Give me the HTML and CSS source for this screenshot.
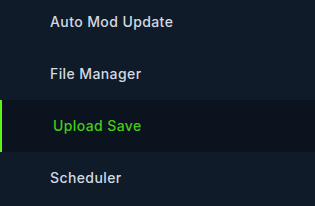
FILE: index.html
```html
<!DOCTYPE html>
<html lang="en">
<head>
    <meta charset="UTF-8">
    <title>menu</title>
    <link rel="stylesheet" href="styles.css">
</head>
<body>
    <ul class="m_menu">
        <li class="m_item">Auto Mod Update</li>
        <li class="m_item">File Manager</li>
        <li class="m_item active">Upload Save</li>
        <li class="m_item">Scheduler</li>
    </ul>
</body>
</html>
```

FILE: styles.css
```css
* {margin: 0;padding: 0;}
html, body {height: 100%;}
body {background: #0f1b29; font-family: Inter, "Noto Sans", sans-serif; overflow: hidden;}
.m_menu {list-style: none; margin-top: -4px;}
.m_item {height: 52px; line-height: 52px; padding-left: 50px; font-size: 14px; letter-spacing: 0.4px; color: #d3d9e0; font-weight: 500;}
.m_item.active {background: #0b141e; color: #47c91c; border-left: 2px solid #5cf516; padding-left: 51px;}
```
